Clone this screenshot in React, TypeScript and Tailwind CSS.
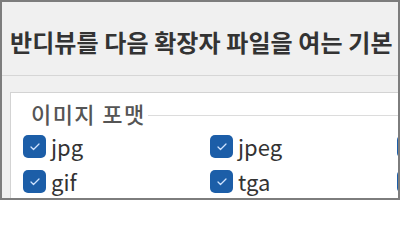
import { Check } from 'lucide-react';

const formats = [
  ['jpg', 'jpeg', ''],
  ['gif', 'tga', ''],
];

function Box({ label }: { label: string }) {
  return (
    <div className="flex items-center gap-[5px] w-[187px] shrink-0">
      <span className="flex items-center justify-center w-[23px] h-[23px] rounded-[5px] bg-[#1c5ea8] shrink-0">
        <Check className="w-[12px] h-[12px] text-[#cfe3ff]" strokeWidth={2.5} />
      </span>
      {label && (
        <span className="text-[22px] leading-none text-[#333] -mt-[2px]">{label}</span>
      )}
    </div>
  );
}

export default function App() {
  return (
    <div
      className="w-[400px] h-[200px] overflow-hidden bg-[#f0f0f0] border-2 border-[#7d7d7d] flex flex-col"
      style={{ fontFamily: '"Noto Sans CJK KR", "Noto Sans", sans-serif' }}
    >
      {/* Header */}
      <div className="pl-[8px] pt-[25px] h-[74px] border-b border-[#d6d6d6] mr-[-2px]">
        <h1 className="text-[24px] leading-[30px] font-bold text-[#333] whitespace-nowrap tracking-[0.1px]">
          반디뷰를 다음 확장자 파일을 여는 기본
        </h1>
      </div>

      {/* Body */}
      <div className="flex-1 pl-[8px] pt-[16px]">
        <div className="h-full bg-white border-t border-l border-[#d3d3d3] pl-[20px]">
          <div className="flex items-center h-[40px]">
            <span className="text-[22px] text-[#555] font-medium whitespace-nowrap leading-none tracking-[1.4px]">
              이미지 포맷
            </span>
            <div className="flex-1 h-px bg-[#dcdcdc] ml-[2px] mt-[4px]" />
          </div>
          <div className="flex flex-col gap-[12px] -ml-[8px] pt-[2px]">
            {formats.map((row, i) => (
              <div key={i} className="flex">
                {row.map((f, j) => (
                  <Box key={j} label={f} />
                ))}
              </div>
            ))}
          </div>
        </div>
      </div>
    </div>
  );
}
